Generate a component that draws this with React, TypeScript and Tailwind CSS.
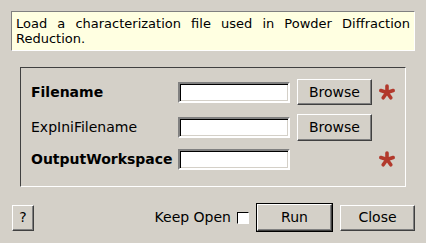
const raised =
  'border border-t-white border-l-white border-b-[#404040] border-r-[#404040] shadow-[inset_-1px_-1px_0_#808080] bg-[#d4d0c8]';
const sunken =
  'border-2 border-t-[#808080] border-l-[#808080] border-b-white border-r-white shadow-[inset_1px_1px_0_#000,inset_-1px_-1px_0_#d4d0c8] bg-white';

function Star() {
  const arms = [0, 72, 144, 216, 288];
  return (
    <svg width="18" height="18" viewBox="0 0 18 18">
      {arms.map((a) => (
        <line
          key={a}
          x1="9"
          y1="9.5"
          x2="9"
          y2="3"
          stroke="#b2392c"
          strokeWidth="3.6"
          strokeLinecap="round"
          transform={`rotate(${a} 9 9.5)`}
        />
      ))}
    </svg>
  );
}

const rows = [
  { label: 'Filename', bold: true, browse: true, req: true, h: 'h-[26px] mt-0' },
  { label: 'ExpIniFilename', bold: false, browse: true, req: false, h: 'h-[27px] mt-[9px]' },
  { label: 'OutputWorkspace', bold: true, browse: false, req: true, h: 'h-[22px] mt-[7px]' },
];

export default function App() {
  return (
    <div className="w-[426px] h-[243px] bg-[#d4d0c8] text-[14px] text-black font-['DejaVu_Sans',sans-serif] px-[11px] pt-[11px] overflow-hidden">
      <div className="h-[40px] w-[404px] bg-[#ffffe1] border border-t-[#808080] border-l-[#808080] border-b-white border-r-white pl-[4px] pr-[4px] pt-[4px] text-[13px] leading-[15px] text-justify">
        Load a characterization file used in Powder Diffraction Reduction.
      </div>

      <div className="ml-[9px] mt-[16px] w-[386px] h-[120px] border border-t-[#404040] border-l-[#404040] border-b-white border-r-white pt-[11px] pl-[10px]">
        {rows.map((r) => (
          <div key={r.label} className={`flex items-center ${r.h}`}>
            <span className={`w-[147px] ${r.bold ? 'font-bold' : ''}`}>{r.label}</span>
            <div className={`w-[112px] h-[21px] ${sunken}`} />
            <div className="w-[75px] ml-[7px]">
              {r.browse && (
                <button className={`w-[75px] ${r.label === 'Filename' ? 'h-[26px]' : 'h-[27px]'} ${raised}`}>Browse</button>
              )}
            </div>
            <div className="ml-[6px] w-[18px] flex items-center justify-center">{r.req && <Star />}</div>
          </div>
        ))}
      </div>

      <div className="mt-[16px] -ml-[10px] w-[414px] h-[29px] flex items-center">
        <button className={`ml-[11px] w-[22px] h-[26px] ${raised}`}>?</button>
        <div className="flex-1" />
        <span>Keep Open</span>
        <div className="ml-[6px] w-[12px] h-[12px] bg-white border border-t-black border-l-black border-b-white border-r-white" />
        <div className="ml-[7px] w-[77px] h-[29px] border border-black">
          <button className={`w-full h-full ${raised}`}>Run</button>
        </div>
        <button className={`ml-[7px] w-[75px] h-[26px] ${raised}`}>Close</button>
      </div>
    </div>
  );
}
